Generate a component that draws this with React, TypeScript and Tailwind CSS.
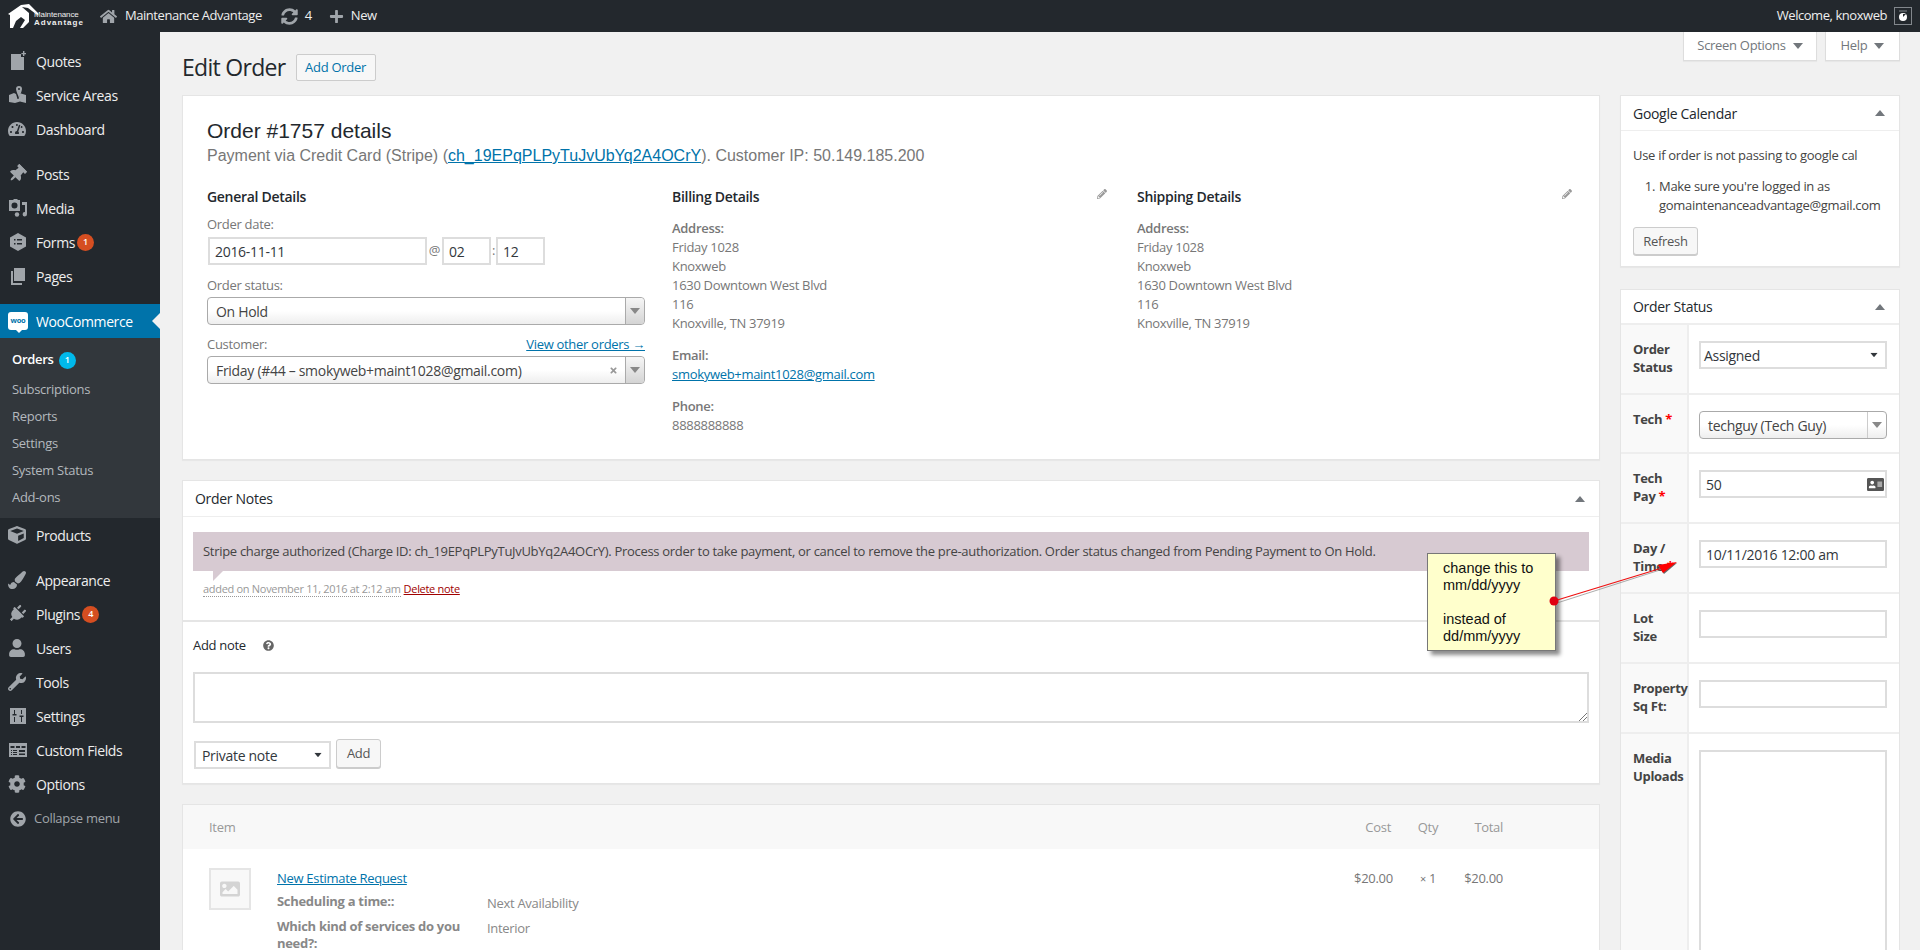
import React from "react";
import {
  FaHome, FaSyncAlt, FaPlus, FaThumbtack, FaPlug, FaUser, FaWrench, FaCog, FaTachometerAlt,
  FaPaintBrush, FaCube, FaPencilAlt, FaQuestionCircle, FaAddressCard, FaTimes, FaArrowCircleLeft, FaImage,
} from "react-icons/fa";

const QuoteIcon = () => (
  <svg width="20" height="20" viewBox="0 0 20 20" fill="#a0a5aa">
    <path d="M3 3h10v3h3v13H3z" />
    <path d="M15 0h1.400v2H18v1.300h-1.600V5H15V3.300h-1.600V2H15z" />
  </svg>
);
const MapIcon = () => (
  <svg width="20" height="20" viewBox="0 0 20 20" fill="#a0a5aa">
    <path d="M1 10l5-2 2 1 1.500 5 1 0 1.500-5 1-.5 5 1.500V18l-6-1.500L7 18l-6-1z" />
    <path d="M11 1a3 3 0 0 1 3 3c0 2-2 6-3 9-1-3-3-7-3-9a3 3 0 0 1 3-3zm0 2a1 1 0 1 0 0 2 1 1 0 0 0 0-2z" />
  </svg>
);
const MediaIcon = () => (
  <svg width="20" height="20" viewBox="0 0 20 20" fill="#a0a5aa">
    <path d="M1 2h4l1-1h3l1 1h2v11H1zm5.500 2.500a3 3 0 1 0 0 6 3 3 0 0 0 0-6z" fillRule="evenodd" />
    <path d="M14 4h5v12a2.200 2.200 0 1 1-2-2V7h-3z" />
    <circle cx="9" cy="16.500" r="2.200" />
  </svg>
);
const FormsIcon = () => (
  <svg width="20" height="20" viewBox="0 0 20 20">
    <path d="M10 1l8 4.500v9L10 19l-8-4.500v-9z" fill="#a0a5aa" />
    <path d="M6 7h1.500v1.500H6zM9 7h5v1.500H9zM6 11h1.500v1.500H6zM9 11h5v1.500H9z" fill="#23282d" />
  </svg>
);
const PagesIcon = () => (
  <svg width="20" height="20" viewBox="0 0 20 20" fill="#a0a5aa">
    <path d="M6 2h11v13H6z" />
    <path d="M3 5h2v12h9v2H3z" />
  </svg>
);
const SlidersIcon = () => (
  <svg width="20" height="20" viewBox="0 0 20 20">
    <path d="M2 2h16v16H2z" fill="#a0a5aa" />
    <path d="M6 4h1v4h1.500v1.500h-4V8H6zM6 11h1v5H6zM13 4h1v4h-1zM11.500 9.500h4V11H14v5h-1v-5h-1.500z" fill="#23282d" />
  </svg>
);
const TableIcon = () => (
  <svg width="20" height="20" viewBox="0 0 20 20">
    <path d="M1 3h18v14H1z" fill="#a0a5aa" />
    <path d="M2.500 6h4v2h-4zM8 6h4v2H8zM13.500 6h4v2h-4zM3 10h1v1H3zM5 10h4v1H5zM3 12h1v1H3zM5 12h4v1H5zM3 14h1v1H3zM5 14h4v1H5zM11 10h6v2h-6zM11 13.500h6V15h-6z" fill="#23282d" />
  </svg>
);

const grayIcon = "text-[#a0a5aa] text-[18px]";

function MenuItem({ icon, label, badge, mt }: { icon: React.ReactNode; label: string; badge?: string; mt?: boolean }) {
  return (
    <div className={mt ? "flex items-center h-[34px] mt-[11px]" : "flex items-center h-[34px]"}>
      <span className="w-[36px] pl-[8px] flex items-center shrink-0">{icon}</span>
      <span className="text-[14px] tracking-[-0.4px] text-[#eeeeee]">{label}</span>
      {badge && (
        <span className="ml-[2px] w-[17px] h-[17px] rounded-full bg-[#d54e21] text-white text-[9px] font-semibold flex items-center justify-center">
          {badge}
        </span>
      )}
    </div>
  );
}

function Sidebar() {
  return (
    <div className="w-[160px] shrink-0 bg-[#23282d] pt-[12px]">
      <MenuItem icon={<QuoteIcon />} label="Quotes" />
      <MenuItem icon={<MapIcon />} label="Service Areas" />
      <MenuItem icon={<FaTachometerAlt className={grayIcon} />} label="Dashboard" />
      <MenuItem mt icon={<FaThumbtack className={`${grayIcon} rotate-45`} />} label="Posts" />
      <MenuItem icon={<MediaIcon />} label="Media" />
      <MenuItem icon={<FormsIcon />} label="Forms" badge="1" />
      <MenuItem icon={<PagesIcon />} label="Pages" />
      <div className="relative flex items-center h-[34px] mt-[11px] bg-[#0073aa]">
        <span className="w-[36px] pl-[8px] shrink-0">
          <span className="relative flex items-center justify-center w-[20px] h-[18px] rounded-[3px] bg-white text-[#0073aa] text-[7.500px] font-bold">
            woo
            <span className="absolute left-[8px] top-[18px] w-0 h-0 border-t-[3px] border-t-white border-l-[3px] border-l-transparent border-r-[3px] border-r-transparent" />
          </span>
        </span>
        <span className="text-[14px] tracking-[-0.4px] text-white">WooCommerce</span>
        <span className="absolute right-0 top-[9px] w-0 h-0 border-y-[8px] border-y-transparent border-r-[8px] border-r-[#f1f1f1]" />
      </div>
      <div className="bg-[#32373c] h-[180px] pt-[11px] pl-[12px] text-[13px] text-[#b4b9be]">
        <div className="flex items-center h-[22px] text-white font-semibold">
          Orders
          <span className="ml-[5px] w-[17px] h-[17px] rounded-full bg-[#00b9eb] text-white text-[9px] flex items-center justify-center">1</span>
        </div>
        <div className="h-[27px] mt-[5px] flex items-center">Subscriptions</div>
        <div className="h-[27px] flex items-center">Reports</div>
        <div className="h-[27px] flex items-center">Settings</div>
        <div className="h-[27px] flex items-center">System Status</div>
        <div className="h-[27px] flex items-center">Add-ons</div>
      </div>
      <MenuItem icon={<FaCube className={grayIcon} />} label="Products" />
      <MenuItem mt icon={<FaPaintBrush className={grayIcon} />} label="Appearance" />
      <MenuItem icon={<FaPlug className={`${grayIcon} rotate-45`} />} label="Plugins" badge="4" />
      <MenuItem icon={<FaUser className={grayIcon} />} label="Users" />
      <MenuItem icon={<FaWrench className={grayIcon} />} label="Tools" />
      <MenuItem icon={<SlidersIcon />} label="Settings" />
      <MenuItem icon={<TableIcon />} label="Custom Fields" />
      <MenuItem icon={<FaCog className={grayIcon} />} label="Options" />
      <div className="flex items-center h-[34px] pt-[1px]">
        <span className="w-[34px] pl-[10px] shrink-0"><FaArrowCircleLeft className="text-[#a0a5aa] text-[16px]" /></span>
        <span className="text-[13px] text-[#a0a5aa]">Collapse menu</span>
      </div>
    </div>
  );
}

function TopBar() {
  return (
    <div className="h-[32px] bg-[#23282d] flex items-center text-[13px] tracking-[-0.45px] text-[#eeeeee]">
      <div className="flex items-center w-[100px] pl-[8px]">
        <svg width="30" height="24" viewBox="0 0 30 24" className="shrink-0" fill="#ffffff">
          <path d="M0 10L13 1 21 0 30 9 33 13 28 10 20 4 14 3 21 9V18L15 24H12L17 16 13 13 8 17 5 24H2V11Z" />
        </svg>
        <div className="-ml-[4px] mt-[5px] text-[8px] leading-[8px] text-[#eeeeee] tracking-normal font-['Liberation_Sans',sans-serif]">
          <div className="tracking-[-0.1px]">Maintenance</div>
          <div className="tracking-[1px] font-bold">Advantage</div>
        </div>
      </div>
      <FaHome className="text-[#a0a5aa] text-[17px]" />
      <span className="ml-[8px]">Maintenance Advantage</span>
      <FaSyncAlt className="text-[#a0a5aa] text-[17px] ml-[19px]" />
      <span className="ml-[7px]">4</span>
      <FaPlus className="text-[#a0a5aa] text-[15px] ml-[17px]" />
      <span className="ml-[7px]">New</span>
      <span className="ml-auto">Welcome, knoxweb</span>
      <span className="ml-[7px] mr-[8px] w-[18px] h-[18px] border border-[#82878c] flex items-center justify-center">
        <svg width="12" height="12" viewBox="0 0 12 12">
          <path d="M2 1h8" stroke="#82878c" />
          <circle cx="6" cy="7" r="4" fill="#ffffff" />
          <path d="M6 7l3-3h-3z" fill="#23282d" />
        </svg>
      </span>
    </div>
  );
}

const Caret = ({ className }: { className?: string }) => (
  <svg width="10" height="6" viewBox="0 0 10 6" className={className} fill="currentColor"><path d="M0 0h10L5 6z" /></svg>
);
const CaretUp = () => (
  <svg width="10" height="6" viewBox="0 0 10 6" fill="#72777c"><path d="M0 6h10L5 0z" /></svg>
);

function TextBox({ children, className }: { children?: React.ReactNode; className: string }) {
  return (
    <div className={`h-[28px] border-2 border-[#dddddd] bg-white text-[#32373c] text-[14px] flex items-center pl-[5px] ${className}`}>
      {children}
    </div>
  );
}

function Select2({ label, clear, light, className }: { label: string; clear?: boolean; light?: boolean; className: string }) {
  return (
    <div className={`h-[28px] rounded-[4px] border border-[#aaaaaa] bg-gradient-to-b from-white from-50% to-[#eeeeee] flex items-center pl-[8px] text-[14px] text-[#444444] ${className}`}>
      <span className="flex-1">{label}</span>
      {clear && <FaTimes className="text-[#999999] text-[9px] mr-[7px]" />}
      <span
        className={
          light
            ? "w-[19px] h-full border-l border-[#cccccc] rounded-r-[4px] flex items-center justify-center"
            : "w-[19px] h-full border-l border-[#aaaaaa] bg-gradient-to-b from-[#f6f6f6] to-[#d4d4d4] rounded-r-[4px] flex items-center justify-center"
        }
      >
        <Caret className="text-[#888888]" />
      </span>
    </div>
  );
}

function Address({ title, email, pad }: { title: string; email?: boolean; pad: string }) {
  return (
    <div className="text-[13px] leading-[19px] text-[#777777]">
      <div className={`flex items-start ${pad}`}>
        <h3 className="flex-1 text-[14px] font-semibold text-[#23282d]">{title}</h3>
        <FaPencilAlt className="text-[#999999] text-[10px] mt-[2px]" />
      </div>
      <div className="font-semibold mt-[13px]">Address:</div>
      <div>Friday 1028</div>
      <div>Knoxweb</div>
      <div>1630 Downtown West Blvd</div>
      <div>116</div>
      <div>Knoxville, TN 37919</div>
      {email && (
        <>
          <div className="font-semibold mt-[13px]">Email:</div>
          <div className="text-[#0073aa] underline">smokyweb+maint1028@gmail.com</div>
          <div className="font-semibold mt-[13px]">Phone:</div>
          <div>8888888888</div>
        </>
      )}
    </div>
  );
}

function OrderPanel() {
  return (
    <div className="h-[365px] bg-white border border-[#e5e5e5] shadow-[0_1px_1px_rgba(0,0,0,0.04)] pt-[22px] pl-[24px]">
      <div className="font-['Liberation_Sans',sans-serif] tracking-normal text-[21px] leading-[26px] text-[#23282d]">Order #1757 details</div>
      <div className="font-['Liberation_Sans',sans-serif] tracking-normal mt-[1px] text-[16px] leading-[22px] text-[#777777]">
        Payment via Credit Card (Stripe) (<span className="text-[#0073aa] underline">ch_19EPqPLPyTuJvUbYq2A4OCrY</span>). Customer IP: 50.149.185.200
      </div>
      <div className="grid grid-cols-[465px_465px_1fr] mt-[20px]">
        <div>
          <h3 className="text-[14px] leading-[19px] font-semibold text-[#23282d]">General Details</h3>
          <div className="text-[13px] leading-[19px] text-[#777777] mt-[9px]">Order date:</div>
          <div className="flex items-center mt-[3px] text-[13px] text-[#777777]">
            <TextBox className="w-[219px] ml-[1px] text-[13px]">2016-11-11</TextBox>
            <span className="w-[15px] text-center">@</span>
            <TextBox className="w-[49px] text-[13px]">02</TextBox>
            <span className="w-[5px] text-center">:</span>
            <TextBox className="w-[49px] text-[13px]">12</TextBox>
          </div>
          <div className="text-[13px] leading-[19px] text-[#777777] mt-[11px]">Order status:</div>
          <Select2 label="On Hold" className="w-[438px] mt-[2px]" />
          <div className="flex w-[438px] text-[13px] leading-[19px] text-[#777777] mt-[10px]">
            <span className="flex-1">Customer:</span>
            <span className="text-[#0073aa] underline">View other orders →</span>
          </div>
          <Select2 clear label="Friday (#44 – smokyweb+maint1028@gmail.com)" className="w-[438px] mt-[2px] text-[13px]" />
        </div>
        <Address title="Billing Details" email pad="pr-[30px]" />
        <Address title="Shipping Details" pad="pr-[27px]" />
      </div>
    </div>
  );
}

function NotesPanel() {
  return (
    <div className="h-[304px] mt-[20px] bg-white border border-[#e5e5e5] shadow-[0_1px_1px_rgba(0,0,0,0.04)] text-[#444444]">
      <div className="h-[36px] border-b border-[#eeeeee] flex items-center justify-between pl-[12px] pr-[14px]">
        <span className="text-[14px] text-[#23282d]">Order Notes</span>
        <CaretUp />
      </div>
      <div className="h-[105px] border-b-2 border-[#e5e5e5] pt-[15px] pl-[10px] pr-[10px]">
        <div className="relative h-[39px] bg-[#d7cad2] pl-[10px] flex items-center text-[13px]">
          Stripe charge authorized (Charge ID: ch_19EPqPLPyTuJvUbYq2A4OCrY). Process order to take payment, or cancel to remove the pre-authorization. Order status changed from Pending Payment to On Hold.
          <span className="absolute left-[20px] top-[39px] w-0 h-0 border-t-[10px] border-t-[#d7cad2] border-r-[10px] border-r-transparent" />
        </div>
        <div className="mt-[10px] ml-[10px] text-[11px] leading-[15px] text-[#999999]">
          <span className="border-b border-dotted border-[#999999]">added on November 11, 2016 at 2:12 am</span>
          <span className="ml-[3px] text-[#a00000] underline">Delete note</span>
        </div>
      </div>
      <div className="pl-[10px] pr-[10px] pt-[14px]">
        <div className="flex items-center text-[13px] leading-[19px] text-[#23282d]">
          Add note
          <FaQuestionCircle className="ml-[17px] text-[#666666] text-[11px]" />
        </div>
        <div className="h-[51px] mt-[17px] border-2 border-[#dddddd] relative">
          <svg width="8" height="8" viewBox="0 0 8 8" className="absolute right-0 bottom-0" stroke="#777777"><path d="M0 8L8 0M4 8l4-4" /></svg>
        </div>
        <div className="flex items-start mt-[16px]">
          <div className="w-[137px] h-[28px] mt-[2px] ml-[1px] border-2 border-[#dddddd] flex items-center justify-between pl-[6px] pr-[6px] text-[14px] text-[#32373c]">
            Private note
            <Caret className="text-[#32373c] scale-75" />
          </div>
          <div className="ml-[5px] w-[45px] h-[29px] rounded-[3px] border border-[#cccccc] bg-[#f7f7f7] shadow-[0_1px_0_#cccccc] flex items-center justify-center text-[13px] text-[#555555]">Add</div>
        </div>
      </div>
    </div>
  );
}

function ItemsPanel() {
  return (
    <div className="h-[200px] mt-[20px] bg-white border border-[#e5e5e5] text-[#888888]">
      <div className="h-[44px] pt-[2px] bg-[#f8f8f8] flex items-center pl-[26px] text-[13px] text-[#999999]">
        <span className="w-[1145px]">Item</span>
        <span className="w-[37px] text-right">Cost</span>
        <span className="w-[64px] text-center ml-[5px]">Qty</span>
        <span className="w-[39px] text-right ml-[4px]">Total</span>
      </div>
      <div className="flex pl-[26px] pt-[19px] text-[13px]">
        <div className="w-[42px] h-[42px] border-2 border-[#e5e5e5] bg-[#f8f8f8] flex items-center justify-center shrink-0">
          <FaImage className="text-[#d4d4d4] text-[20px]" />
        </div>
        <div className="w-[1103px] pl-[26px]">
          <div className="text-[#0073aa] underline leading-[19px] mt-[1px]">New Estimate Request</div>
          <div className="flex mt-[5px]">
            <span className="w-[210px] font-bold leading-[17px]">Scheduling a time::</span>
            <span className="mt-[2px] leading-[17px]">Next Availability</span>
          </div>
          <div className="flex mt-[6px]">
            <span className="w-[210px] font-bold leading-[17px] pr-[20px]">Which kind of services do you need?:</span>
            <span className="mt-[2px] leading-[17px]">Interior</span>
          </div>
        </div>
        <span className="w-[37px] text-right text-[#777777] leading-[19px] mt-[1px] whitespace-nowrap">$20.00</span>
        <span className="w-[64px] text-center ml-[5px] text-[#777777] leading-[19px] mt-[1px]"><span className="text-[11px]">×</span> 1</span>
        <span className="w-[39px] text-right ml-[4px] text-[#777777] leading-[19px] mt-[1px] whitespace-nowrap">$20.00</span>
      </div>
    </div>
  );
}

function StatusRow({ label, req, h, children }: { label: string[]; req?: boolean; h: string; children?: React.ReactNode }) {
  return (
    <div className={`flex border-b-2 border-[#eeeeee] ${h}`}>
      <div className="w-[68px] shrink-0 bg-[#f9f9f9] border-r-2 border-[#eeeeee] pl-[12px] pt-[15px] text-[13px] leading-[18px] font-bold text-[#444444]">
        {label.map((l, i) => (
          <div key={l}>
            {l}
            {req && i === label.length - 1 && <span className="text-[#ff0000]"> *</span>}
          </div>
        ))}
      </div>
      <div className="flex-1 pl-[10px] pr-[12px] pt-[16px]">{children}</div>
    </div>
  );
}

function RightColumn() {
  return (
    <div className="w-[280px] shrink-0 ml-[20px] pt-[63px]">
      <div className="h-[172px] bg-white border border-[#e5e5e5] shadow-[0_1px_1px_rgba(0,0,0,0.04)] text-[13px] text-[#444444]">
        <div className="h-[35px] border-b border-[#eeeeee] flex items-center justify-between pl-[12px] pr-[14px]">
          <span className="text-[14px] text-[#23282d]">Google Calendar</span>
          <CaretUp />
        </div>
        <div className="pl-[12px] pt-[15px] leading-[19px]">
          <div>Use if order is not passing to google cal</div>
          <div className="flex mt-[12px]">
            <span className="w-[26px] text-right pr-[4px]">1.</span>
            <span>Make sure you're logged in as<br />gomaintenanceadvantage@gmail.com</span>
          </div>
          <div className="mt-[12px] w-[65px] h-[28px] rounded-[3px] border border-[#cccccc] bg-[#f7f7f7] shadow-[0_1px_0_#cccccc] flex items-center justify-center text-[#555555]">Refresh</div>
        </div>
      </div>
      <div className="mt-[22px] h-[700px] bg-white border border-[#e5e5e5]">
        <div className="h-[35px] border-b-2 border-[#eeeeee] flex items-center justify-between pl-[12px] pr-[14px]">
          <span className="text-[14px] text-[#23282d]">Order Status</span>
          <CaretUp />
        </div>
        <StatusRow label={["Order", "Status"]} h="h-[70px]">
          <TextBox className="w-full justify-between pr-[6px]">
            <span className="-ml-[2px]">Assigned</span>
            <Caret className="text-[#32373c] scale-75" />
          </TextBox>
        </StatusRow>
        <StatusRow label={["Tech"]} req h="h-[59px]">
          <Select2 light label="techguy (Tech Guy)" className="w-full" />
        </StatusRow>
        <StatusRow label={["Tech", "Pay"]} req h="h-[70px]">
          <TextBox className="w-full justify-between pr-[1px]">
            50
            <FaAddressCard className="text-[#555555] text-[17px]" />
          </TextBox>
        </StatusRow>
        <StatusRow label={["Day /", "Time"]} req h="h-[70px]">
          <TextBox className="w-full text-[13px]">10/11/2016 12:00 am</TextBox>
        </StatusRow>
        <StatusRow label={["Lot", "Size"]} h="h-[70px]">
          <TextBox className="w-full" />
        </StatusRow>
        <StatusRow label={["Property", "Sq Ft:"]} h="h-[70px]">
          <TextBox className="w-full" />
        </StatusRow>
        <StatusRow label={["Media", "Uploads"]} h="h-[300px]">
          <div className="h-[260px] border-2 border-[#dddddd]" />
        </StatusRow>
      </div>
    </div>
  );
}

export default function App() {
  return (
    <div className="relative w-[1920px] h-[950px] overflow-hidden bg-[#f1f1f1] font-['Open_Sans',sans-serif] tracking-[-0.3px]">
      <TopBar />
      <div className="flex h-[918px]">
        <Sidebar />
        <div className="relative flex-1 flex pl-[22px] pr-[20px]">
          <div className="absolute right-[20px] top-0 flex gap-[8px] text-[13px] text-[#72777c]">
            <div className="w-[134px] h-[29px] bg-white border-x border-b border-[#dddddd] shadow-[0_1px_1px_rgba(0,0,0,0.04)] flex items-center justify-center gap-[7px]">
              Screen Options <Caret className="text-[#72777c]" />
            </div>
            <div className="w-[75px] h-[29px] bg-white border-x border-b border-[#dddddd] shadow-[0_1px_1px_rgba(0,0,0,0.04)] flex items-center justify-center gap-[7px]">
              Help <Caret className="text-[#72777c]" />
            </div>
          </div>
          <div className="w-[1418px] shrink-0">
            <div className="h-[63px] flex items-center pt-[8px]">
              <h1 className="text-[23px] tracking-[-0.7px] text-[#23282d] leading-[29px]">Edit Order</h1>
              <span className="ml-[10px] w-[80px] h-[27px] rounded-[2px] border border-[#cccccc] bg-[#f7f7f7] flex items-center justify-center text-[13px] text-[#0073aa]">Add Order</span>
            </div>
            <OrderPanel />
            <NotesPanel />
            <ItemsPanel />
          </div>
          <RightColumn />
        </div>
      </div>
      <div className="absolute left-[1427px] top-[553px] w-[129px] h-[98px] bg-[#ffffcc] border border-[#777777] shadow-[4px_4px_4px_rgba(0,0,0,0.45)] pl-[15px] pt-[6px] font-['Liberation_Sans',sans-serif] tracking-normal text-[14.500px] leading-[17px] text-[#111111]">
        change this to<br />mm/dd/yyyy<br /><br />instead of<br />dd/mm/yyyy
      </div>
      <svg className="absolute left-[1540px] top-[550px]" width="150" height="65" viewBox="1540 550 150 65">
        <path d="M1556 602L1662 568" stroke="#777777" strokeWidth="1" transform="translate(1 1)" opacity="0.6" />
        <path d="M1554 601L1662 568" stroke="#ee1111" strokeWidth="1.300" />
        <path d="M1677 562L1658 565L1664 573Z" fill="#666666" transform="translate(0 1)" />
        <path d="M1677 562L1658 565L1663 573Z" fill="#ff0000" />
        <circle cx="1554" cy="601" r="4.500" fill="#e00010" />
      </svg>
    </div>
  );
}
